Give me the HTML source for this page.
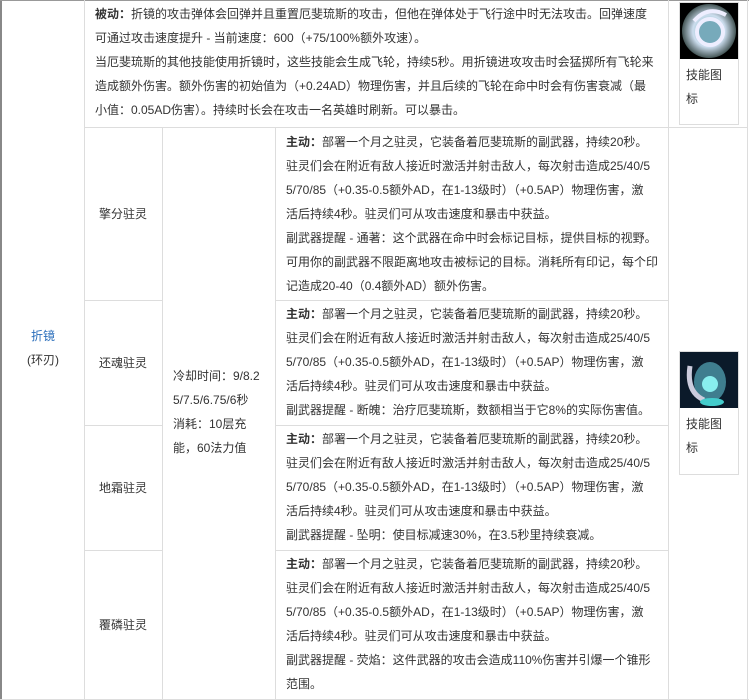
<!DOCTYPE html>
<html><head><meta charset="utf-8"><style>
*{margin:0;padding:0;box-sizing:border-box}
body{width:749px;height:700px;background:#fff;position:relative;overflow:hidden;font-family:"Liberation Sans","Noto Sans CJK SC",sans-serif;font-size:12px;color:#333}
.v,.h{position:absolute;background:#ddd}
.v{width:1px}.h{height:1px}
.t{position:absolute;line-height:24px;white-space:nowrap}
b{font-weight:bold}
.c{text-align:center}
.icon{position:absolute;border:1px solid #ddd;width:60px}
.icon .img{width:58px;height:56px;background:#000;overflow:hidden}
.icon .lb{padding:4px 0 0 6px;line-height:24px;font-size:12px}
</style></head><body>
<div class="v" style="left:0;top:0;height:700px;background:#888;width:2px"></div>
<div class="h" style="left:0;top:0;width:749px;background:#999"></div>
<div class="v" style="left:747px;top:0;height:700px"></div>
<div class="v" style="left:84px;top:0;height:700px"></div>
<div class="v" style="left:668px;top:0;height:700px"></div>
<div class="v" style="left:162px;top:127px;height:573px"></div>
<div class="v" style="left:275px;top:127px;height:573px"></div>
<div class="h" style="left:84px;top:127px;width:664px"></div>
<div class="h" style="left:84px;top:300px;width:78px"></div>
<div class="h" style="left:275px;top:300px;width:393px"></div>
<div class="h" style="left:84px;top:425px;width:78px"></div>
<div class="h" style="left:275px;top:425px;width:393px"></div>
<div class="h" style="left:84px;top:550px;width:78px"></div>
<div class="h" style="left:275px;top:550px;width:393px"></div>
<div class="h" style="left:0;top:699px;width:749px"></div>

<div class="t" style="left:95px;top:2px">
<b>被动：</b>折镜的攻击弹体会回弹并且重置厄斐琉斯的攻击，但他在弹体处于飞行途中时无法攻击。回弹速度<br>
可通过攻击速度提升 - 当前速度：600（+75/100%额外攻速）。<br>
当厄斐琉斯的其他技能使用折镜时，这些技能会生成飞轮，持续5秒。用折镜进攻攻击时会猛掷所有飞轮来<br>
造成额外伤害。额外伤害的初始值为（+0.24AD）物理伤害，并且后续的飞轮在命中时会有伤害衰减（最<br>
小值：0.05AD伤害）。持续时长会在攻击一名英雄时刷新。可以暴击。</div>

<div class="icon" style="left:679px;top:2px;height:123px"><div class="img">
<svg width="58" height="56"><defs><radialGradient id="g1" cx="50%" cy="50%" r="50%"><stop offset="0" stop-color="#6aa"/><stop offset=".6" stop-color="#cde"/><stop offset="1" stop-color="#455"/></radialGradient></defs><circle cx="29" cy="28" r="27" fill="url(#g1)"/><circle cx="30" cy="29" r="13" fill="#7ab" stroke="#eef" stroke-width="4"/><path d="M14 18 Q28 2 46 12" stroke="#eef" stroke-width="4" fill="none"/></svg></div><div class="lb">技能图<br>标</div></div>

<div class="icon" style="left:679px;top:351px;height:124px"><div class="img" style="background:#0b1a2a">
<svg width="58" height="56"><ellipse cx="30" cy="30" rx="16" ry="20" fill="#5ab" opacity=".7"/><circle cx="30" cy="32" r="8" fill="#8ee"/><path d="M10 14 Q6 40 24 48" stroke="#ccd" stroke-width="5" fill="none"/><ellipse cx="32" cy="50" rx="12" ry="4" fill="#4cc"/></svg></div><div class="lb">技能图<br>标</div></div>

<div class="t c" style="left:2px;width:82px;top:324px"><span style="color:#2a6ebb">折镜</span><br>(环刃)</div>
<div class="t c" style="left:84px;width:78px;top:202px">擎分驻灵</div>
<div class="t c" style="left:84px;width:78px;top:351px">还魂驻灵</div>
<div class="t c" style="left:84px;width:78px;top:476px">地霜驻灵</div>
<div class="t c" style="left:84px;width:78px;top:613px">覆磷驻灵</div>
<div class="t" style="left:173px;top:364px">冷却时间：9/8.2<br>5/7.5/6.75/6秒<br>消耗：10层充<br>能，60法力值</div>

<div class="t" style="left:286px;top:130px"><b>主动：</b>部署一个月之驻灵，它装备着厄斐琉斯的副武器，持续20秒。<br>驻灵们会在附近有敌人接近时激活并射击敌人，每次射击造成25/40/5<br>5/70/85（+0.35-0.5额外AD，在1-13级时）（+0.5AP）物理伤害，激<br>活后持续4秒。驻灵们可从攻击速度和暴击中获益。<br>副武器提醒 - 通著：这个武器在命中时会标记目标，提供目标的视野。<br>可用你的副武器不限距离地攻击被标记的目标。消耗所有印记，每个印<br>记造成20-40（0.4额外AD）额外伤害。</div>
<div class="t" style="left:286px;top:302px"><b>主动：</b>部署一个月之驻灵，它装备着厄斐琉斯的副武器，持续20秒。<br>驻灵们会在附近有敌人接近时激活并射击敌人，每次射击造成25/40/5<br>5/70/85（+0.35-0.5额外AD，在1-13级时）（+0.5AP）物理伤害，激<br>活后持续4秒。驻灵们可从攻击速度和暴击中获益。<br>副武器提醒 - 断魄：治疗厄斐琉斯，数额相当于它8%的实际伤害值。</div>
<div class="t" style="left:286px;top:427px"><b>主动：</b>部署一个月之驻灵，它装备着厄斐琉斯的副武器，持续20秒。<br>驻灵们会在附近有敌人接近时激活并射击敌人，每次射击造成25/40/5<br>5/70/85（+0.35-0.5额外AD，在1-13级时）（+0.5AP）物理伤害，激<br>活后持续4秒。驻灵们可从攻击速度和暴击中获益。<br>副武器提醒 - 坠明：使目标减速30%，在3.5秒里持续衰减。</div>
<div class="t" style="left:286px;top:552px"><b>主动：</b>部署一个月之驻灵，它装备着厄斐琉斯的副武器，持续20秒。<br>驻灵们会在附近有敌人接近时激活并射击敌人，每次射击造成25/40/5<br>5/70/85（+0.35-0.5额外AD，在1-13级时）（+0.5AP）物理伤害，激<br>活后持续4秒。驻灵们可从攻击速度和暴击中获益。<br>副武器提醒 - 荧焰：这件武器的攻击会造成110%伤害并引爆一个锥形<br>范围。</div>
</body></html>
